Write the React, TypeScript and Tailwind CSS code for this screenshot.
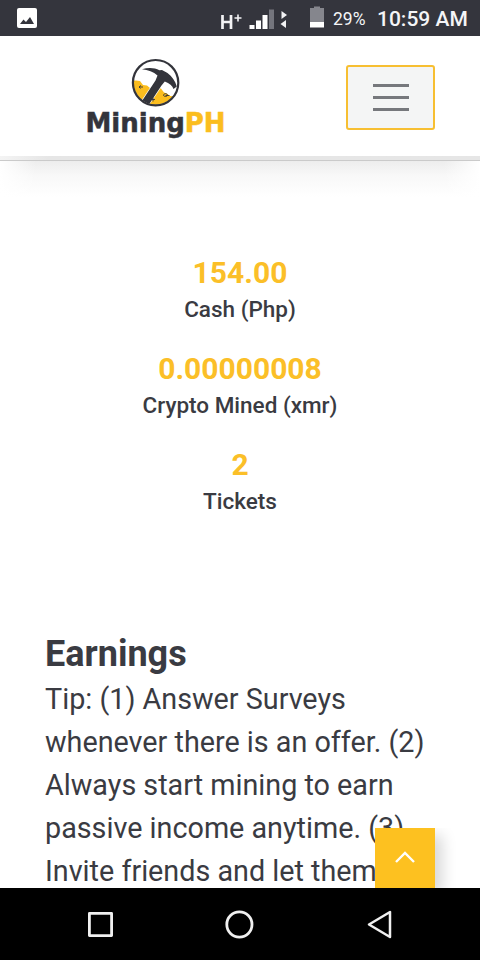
const stats = [
  { value: '154.00', label: 'Cash (Php)' },
  { value: '0.00000008', label: 'Crypto Mined (xmr)' },
  { value: '2', label: 'Tickets' },
];

const tipLines = [
  'Tip: (1) Answer Surveys',
  'whenever there is an offer. (2)',
  'Always start mining to earn',
  'passive income anytime. (3)',
  'Invite friends and let them',
];

function StatusBar() {
  return (
    <div className="flex h-9 shrink-0 items-center bg-[#34353d] text-[#f5f5f7]">
      <svg className="ml-[17px] h-5 w-5" viewBox="0 0 20 20">
        <rect width="20" height="20" rx="2" fill="#fff" />
        <path d="M3 16l3.500-4.500 2.500 2.500 4-5 4 7z" fill="#34353d" />
      </svg>
      <svg className="ml-[183px] h-9 w-[106px]" viewBox="0 0 106 36">
        <g fill="none" stroke="#f2f2f4">
          <path d="M2.500 15v14M11 15v14M2.500 22H11" strokeWidth="2.700" />
          <path d="M18 14.500v7M14.500 18h7" strokeWidth="1.600" />
        </g>
        <path d="M29.500 25h5v4h-5zM36 20.500h5V29h-5zM42.500 15h5v14h-5z" fill="#fff" />
        <path d="M49 9.500h5V29h-5z" fill="#74757d" />
        <path d="M61.500 11v8l5.500-4zM66 20v8l-5.500-4z" fill="#f2f2f4" />
        <path d="M94 6.500h6V8h4v14H90V8h4z" fill="#85868d" />
        <path d="M90 22h14v5.500H90z" fill="#fff" />
      </svg>
      <span className="ml-[7px] w-[34px] whitespace-nowrap pt-px text-[17.500px] leading-9">29%</span>
      <span className="ml-[10px] whitespace-nowrap pt-0.5 text-[21px] font-medium leading-9">10:59 AM</span>
    </div>
  );
}

function Logo() {
  return (
    <div className="flex w-[140px] flex-col items-center">
      <svg className="h-[50px] w-[50px]" viewBox="0 0 50 50">
        <defs>
          <clipPath id="badge">
            <circle cx="25.600" cy="24.700" r="22" />
          </clipPath>
        </defs>
        <g clipPath="url(#badge)">
          <path d="M0 23l6-.5 4 .5 3 4 4 .5 3 2.500 8-1 3 1.500 3 4 3 1 3 2.500 4 .3 6-.8V50H0z" fill="#fbbd1e" />
          <path d="M14.500 46L30 23" stroke="#fff" strokeWidth="9" />
          <path
            d="M12 11.300C18 9.200 24.500 9.500 29.500 12.200L32 12 37.500 15C42 18.500 45.300 23 46.800 28.500L43.500 31C42.500 28 39.500 25.300 34.800 23.600L31.500 27.500 18 48 11 44.500 25.500 22.500 27.500 17.500C23.500 14 18 12 12 11.300z"
            fill="#33343b"
          />
          <path
            d="M9 29h4M11 27.500l-2 1.500 1.500 1.500M21 41.500h4M23 39.500v4M33.500 37.500c0-2.500 4-2.500 4 0-1 1.300-3 1.300-4 0zM35.500 37.500h4"
            stroke="#33343b"
            strokeWidth="0.900"
            fill="none"
          />
        </g>
        <circle cx="25.600" cy="24.700" r="22.700" fill="none" stroke="#33343b" strokeWidth="2.200" />
      </svg>
      <div className="ml-px whitespace-nowrap font-['DejaVu_Sans',sans-serif] text-[26px] font-bold leading-[30px] text-[#33343b] [-webkit-text-stroke:0.5px_currentColor]">
        Mining<span className="text-[#fbbd1e]">PH</span>
      </div>
    </div>
  );
}

function Header() {
  return (
    <header className="flex h-[120px] shrink-0 items-start justify-between bg-white pl-[85px] pr-[45px]">
      <div className="mt-[22px]">
        <Logo />
      </div>
      <button
        aria-label="Menu"
        className="mt-[29px] flex h-[65px] w-[89px] flex-col items-center justify-center gap-[9px] rounded-[3px] border-2 border-[#f7bf32] bg-[#f4f5f5]"
      >
        <span className="h-[3px] w-9 bg-[#76787c]" />
        <span className="h-[3px] w-9 bg-[#76787c]" />
        <span className="h-[3px] w-9 bg-[#76787c]" />
      </button>
    </header>
  );
}

function HeaderShadow() {
  return (
    <div className="relative h-[41px] shrink-0">
      <div className="h-1 bg-linear-to-r from-[#f4f4f4] via-[#e6e6e6] via-10% to-[#e6e6e6]" />
      <div className="h-px bg-[#cacaca]" />
      <div className="h-9 bg-linear-to-b from-[#ededed] via-[#f8f8f8] via-40% to-white" />
      <div className="absolute bottom-0 left-0 h-9 w-9 bg-linear-to-r from-white to-white/0" />
      <div className="absolute bottom-0 right-0 h-9 w-9 bg-linear-to-l from-white to-white/0" />
    </div>
  );
}

function NavBar() {
  return (
    <nav className="h-[72px] shrink-0 bg-black">
      <svg className="h-[72px] w-[480px]" viewBox="0 0 480 72" fill="none" stroke="#f0f0f0" strokeWidth="2.800" strokeLinejoin="round">
        <rect x="89.400" y="25.400" width="22.200" height="22.200" />
        <circle cx="239.400" cy="36.500" r="12.600" />
        <path d="M390 24v25L369 36.500z" strokeWidth="2.500" />
      </svg>
    </nav>
  );
}

export default function App() {
  return (
    <div className="relative flex h-[960px] w-[480px] flex-col overflow-hidden bg-white font-[Roboto,sans-serif] text-[#3a3b42]">
      <StatusBar />
      <Header />
      <HeaderShadow />

      <main className="h-[691px] shrink-0 overflow-hidden">
        <section className="flex flex-col items-center gap-6 pt-[58px]">
          {stats.map((s) => (
            <div key={s.label} className="h-[72px] whitespace-nowrap text-center">
              <div className="text-[30px] font-bold leading-9 text-[#fbbf28]">{s.value}</div>
              <div className="text-[22.500px] font-medium leading-9">{s.label}</div>
            </div>
          ))}
        </section>
        <section className="mt-[111px] whitespace-nowrap pl-[45px]">
          <h2 className="text-[36px] font-bold leading-[48px]">Earnings</h2>
          <p className="text-[28.750px] leading-[43px]">
            {tipLines.map((line) => (
              <span key={line} className="block">
                {line}
              </span>
            ))}
          </p>
        </section>
      </main>

      <NavBar />
      <button
        aria-label="Back to top"
        className="absolute left-[375px] top-[828px] flex h-[60px] w-[60px] justify-center bg-[#fdc120] shadow-[7px_7px_14px_rgba(0,0,0,0.16)] [clip-path:inset(0_-30px_0_0)]"
      >
        <svg className="mt-[22px] h-3.5 w-[22px]" viewBox="0 0 22 14" fill="none" stroke="#fff" strokeWidth="2.400">
          <path d="M2 12l9-9 9 9" />
        </svg>
      </button>
    </div>
  );
}
